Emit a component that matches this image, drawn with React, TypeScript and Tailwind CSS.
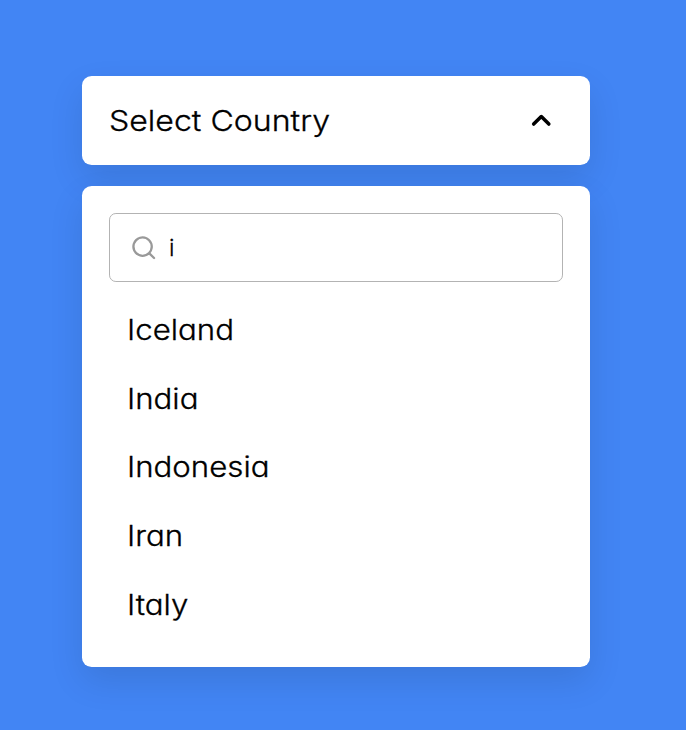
import React from "react";

const countries = ["Iceland", "India", "Indonesia", "Iran", "Italy"];

export default function App() {
  return (
    <div className="flex h-[730px] w-[686px] flex-col bg-[#4285f4] pt-[76px] pl-[82px] font-['Inter','Liberation_Sans',sans-serif] font-light text-black [font-feature-settings:'cv11'_1]">
      <button className="flex h-[89px] w-[508px] items-center justify-between rounded-[9.6px] bg-white pr-[27.5px] pl-[26.5px] text-[29px] shadow-[0_14px_34px_rgba(0,0,0,0.1)]">
        <span className="origin-left scale-x-[1.106] [-webkit-text-stroke:0.3px_black]">Select Country</span>
        <svg viewBox="0 0 24 24" className="size-[42.6px] rotate-180" fill="currentColor">
          <path d="M17,9.17a1,1,0,0,0-1.41,0L12,12.71,8.46,9.17a1,1,0,0,0-1.41,0,1,1,0,0,0,0,1.42l4.24,4.24a1,1,0,0,0,1.42,0L17,10.59A1,1,0,0,0,17,9.17Z" />
        </svg>
      </button>
      <div className="mt-[21px] h-[481px] w-[508px] rounded-[9.6px] bg-white px-[27px] pt-[27px] shadow-[0_14px_34px_rgba(0,0,0,0.1)]">
        <label className="flex h-[69px] w-[454px] items-center rounded-[6.9px] border border-[#b3b3b3] pl-[19.5px]">
          <svg viewBox="0 0 24 24" className="size-[27.5px] shrink-0 text-[#999]" fill="currentColor">
            <path d="M21.71,20.29,18,16.61A9,9,0,1,0,16.61,18l3.68,3.68a1,1,0,0,0,1.42,0A1,1,0,0,0,21.71,20.29ZM11,18a7,7,0,1,1,7-7A7,7,0,0,1,11,18Z" />
          </svg>
          <input type="text" defaultValue="i" className="ml-3 w-[360px] text-[23.4px] outline-none [-webkit-text-stroke:0.3px_black]" />
        </label>
        <ul className="mt-[14px] pl-[17.5px] text-[28px]">
          {countries.map((name) => (
            <li key={name} className="flex h-[68.6px] origin-left scale-x-[1.115] items-center [-webkit-text-stroke:0.3px_black]">
              {name}
            </li>
          ))}
        </ul>
      </div>
    </div>
  );
}
